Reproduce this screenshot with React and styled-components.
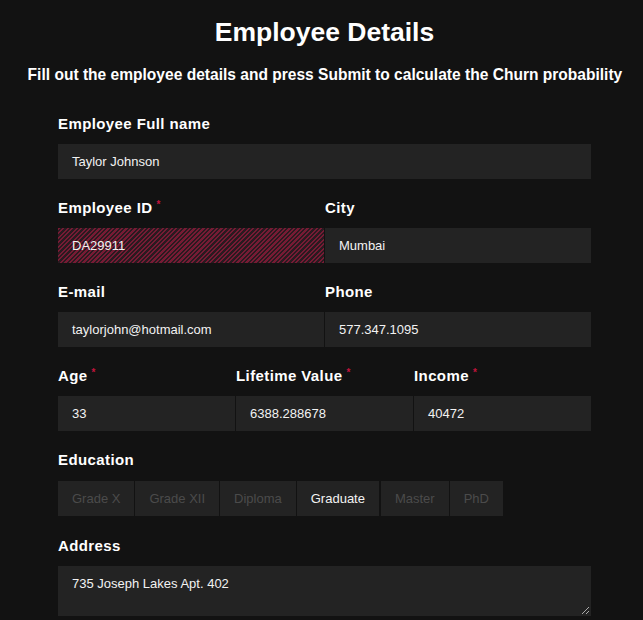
import React from "react"
import styled, { createGlobalStyle } from "styled-components"

const GlobalStyle = createGlobalStyle`
  html, body {
    margin: 0;
    padding: 0;
    background: #121212;
  }
  body {
    font-family: "Liberation Sans", Arial, sans-serif;
    color: #fff;
  }
`

const Page = styled.div`
  display: flex;
  flex-direction: column;
  align-items: center;
  padding: 16px 0 0 6px;
`

const Title = styled.h1`
  margin: 0;
  font-size: 26.5px;
  font-weight: bold;
  line-height: 32px;
`

// the subtitle in the design is a condensed face, squeeze Arial to fit
const Subtitle = styled.p`
  margin: 17px 0 0;
  font-size: 17px;
  font-weight: bold;
  line-height: 20px;
  white-space: nowrap;
  transform: scaleX(0.915);
`

const Form = styled.form`
  width: 533px;
  margin-top: 29px;
  display: flex;
  flex-direction: column;
  gap: 19px;
`

const Row = styled.div`
  display: grid;
  grid-template-columns: repeat(${p => p.cols || 1}, 1fr);
  column-gap: 1px;
`

const Field = styled.div`
  display: flex;
  flex-direction: column;
`

const Label = styled.label`
  font-size: 15px;
  font-weight: bold;
  letter-spacing: 0.4px;
  line-height: 18px;
  margin: 1px 0 11px;
  color: #fff;
`

const Required = styled.sup`
  color: #c0143c;
  font-size: 10px;
  margin-left: 4px;
  vertical-align: 5px;
  line-height: 0;
`

const Input = styled.div`
  height: 35px;
  display: flex;
  align-items: center;
  padding: 0 14px;
  font-size: 13px;
  color: #f2f2f2;
  background: ${p =>
    p.invalid
      ? "repeating-linear-gradient(-45deg, #761b34 0 1.6px, #2a1a20 1.6px 3.2px)"
      : "#232323"};
`

const Choices = styled.div`
  display: flex;
  gap: 1px;
  margin: 1px 0 1px;
`

const Choice = styled.button`
  height: 35px;
  padding: 0 14px;
  border: none;
  background: #232323;
  font-family: "Liberation Sans", Arial, sans-serif;
  font-size: 13px;
  color: ${p => (p.active ? "#f2f2f2" : "#4b4b4b")};
  margin-right: ${p => (p.gapRight ? "1px" : "0")};
`

const TextArea = styled.div`
  position: relative;
  height: 50px;
  padding: 10px 14px 0;
  box-sizing: border-box;
  font-size: 13px;
  color: #f2f2f2;
  background: #232323;
`

const Grip = styled.svg`
  position: absolute;
  right: 1px;
  bottom: 1px;
`

const levels = ["Grade X", "Grade XII", "Diploma", "Graduate", "Master", "PhD"]

const App = () => (
  <Page>
    <GlobalStyle />
    <Title>Employee Details</Title>
    <Subtitle>
      Fill out the employee details and press Submit to calculate the Churn probability
    </Subtitle>
    <Form>
      <Field>
        <Label>Employee Full name</Label>
        <Input>Taylor Johnson</Input>
      </Field>
      <Row cols={2}>
        <Field>
          <Label>
            Employee ID<Required>*</Required>
          </Label>
          <Input invalid>DA29911</Input>
        </Field>
        <Field>
          <Label>City</Label>
          <Input>Mumbai</Input>
        </Field>
      </Row>
      <Row cols={2}>
        <Field>
          <Label>E-mail</Label>
          <Input>taylorjohn@hotmail.com</Input>
        </Field>
        <Field>
          <Label>Phone</Label>
          <Input>577.347.1095</Input>
        </Field>
      </Row>
      <Row cols={3}>
        <Field>
          <Label>
            Age<Required>*</Required>
          </Label>
          <Input>33</Input>
        </Field>
        <Field>
          <Label>
            Lifetime Value<Required>*</Required>
          </Label>
          <Input>6388.288678</Input>
        </Field>
        <Field>
          <Label>
            Income<Required>*</Required>
          </Label>
          <Input>40472</Input>
        </Field>
      </Row>
      <Field>
        <Label>Education</Label>
        <Choices>
          {levels.map(l => (
            <Choice
              type="button"
              key={l}
              active={l === "Graduate"}
              gapRight={l === "Graduate"}
            >
              {l}
            </Choice>
          ))}
        </Choices>
      </Field>
      <Field>
        <Label>Address</Label>
        <TextArea>
          735 Joseph Lakes Apt. 402
          <Grip width="9" height="9" viewBox="0 0 9 9">
            <path d="M8 1L1 8M8 5L5 8" stroke="#aaa" strokeWidth="1" />
          </Grip>
        </TextArea>
      </Field>
    </Form>
  </Page>
)

export default App
